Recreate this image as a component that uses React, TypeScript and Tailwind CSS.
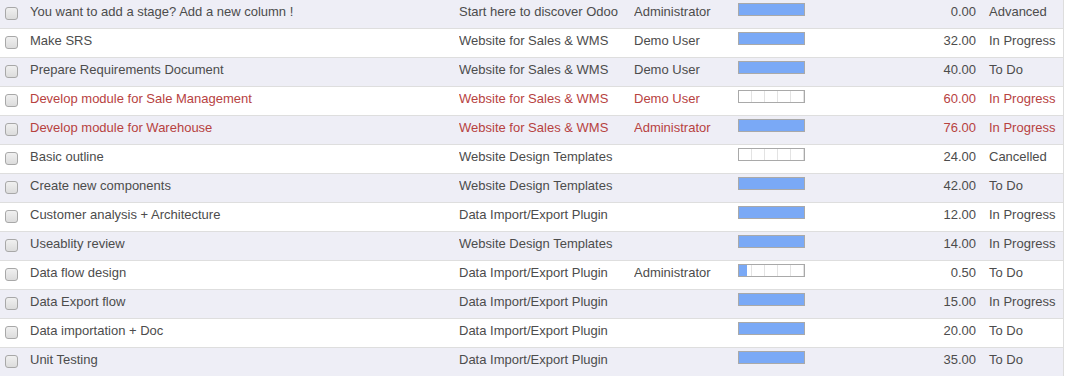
import React from 'react';

type Task = {
  name: string;
  project: string;
  user: string;
  progress: number;
  hours: string;
  stage: string;
  danger?: boolean;
};

const tasks: Task[] = [
  { name: 'You want to add a stage? Add a new column !', project: 'Start here to discover Odoo', user: 'Administrator', progress: 100, hours: '0.00', stage: 'Advanced' },
  { name: 'Make SRS', project: 'Website for Sales & WMS', user: 'Demo User', progress: 100, hours: '32.00', stage: 'In Progress' },
  { name: 'Prepare Requirements Document', project: 'Website for Sales & WMS', user: 'Demo User', progress: 100, hours: '40.00', stage: 'To Do' },
  { name: 'Develop module for Sale Management', project: 'Website for Sales & WMS', user: 'Demo User', progress: 0, hours: '60.00', stage: 'In Progress', danger: true },
  { name: 'Develop module for Warehouse', project: 'Website for Sales & WMS', user: 'Administrator', progress: 100, hours: '76.00', stage: 'In Progress', danger: true },
  { name: 'Basic outline', project: 'Website Design Templates', user: '', progress: 0, hours: '24.00', stage: 'Cancelled' },
  { name: 'Create new components', project: 'Website Design Templates', user: '', progress: 100, hours: '42.00', stage: 'To Do' },
  { name: 'Customer analysis + Architecture', project: 'Data Import/Export Plugin', user: '', progress: 100, hours: '12.00', stage: 'In Progress' },
  { name: 'Useablity review', project: 'Website Design Templates', user: '', progress: 100, hours: '14.00', stage: 'In Progress' },
  { name: 'Data flow design', project: 'Data Import/Export Plugin', user: 'Administrator', progress: 12, hours: '0.50', stage: 'To Do' },
  { name: 'Data Export flow', project: 'Data Import/Export Plugin', user: '', progress: 100, hours: '15.00', stage: 'In Progress' },
  { name: 'Data importation + Doc', project: 'Data Import/Export Plugin', user: '', progress: 100, hours: '20.00', stage: 'To Do' },
  { name: 'Unit Testing', project: 'Data Import/Export Plugin', user: '', progress: 100, hours: '35.00', stage: 'To Do' },
];

const ProgressBar: React.FC<{ value: number }> = ({ value }) => (
  <div className="relative w-[67px] h-[13px] border border-[#a9a9a9] bg-white flex">
    {[0, 1, 2, 3, 4].map((i) => (
      <div key={i} className="flex-1 border-r border-[#e3e3e3] last:border-r-0" />
    ))}
    <div className="absolute left-0 top-0 bottom-0 bg-[#7aa9f6]" style={{ width: `${value}%` }} />
  </div>
);

const App: React.FC = () => {
  return (
    <div className="w-[1064px] border-r border-[#dddddd] bg-white text-[13px] leading-[18px] text-[#4c4c4c] font-['Liberation_Sans',Arial,sans-serif]">
      {tasks.map((t, i) => (
        <div
          key={i}
          className={`flex h-[29px] border-b border-[#dedede] ${i % 2 === 0 ? 'bg-[#eeeef6]' : 'bg-white'} ${t.danger ? 'text-[#b7423f]' : ''}`}
        >
          <div className="w-[30px] shrink-0 pl-[5px] pt-[7px]">
            <div className="w-[13px] h-[13px] rounded-[3px] border border-[#a8a8a8] bg-gradient-to-b from-[#f0f0f0] to-[#dcdcdc]" />
          </div>
          <div className="w-[429px] shrink-0 pt-[3px] truncate">{t.name}</div>
          <div className="w-[175px] shrink-0 pt-[3px] truncate">{t.project}</div>
          <div className="w-[104px] shrink-0 pt-[3px] truncate">{t.user}</div>
          <div className="w-[80px] shrink-0 pt-[3px]">
            <ProgressBar value={t.progress} />
          </div>
          <div className="w-[158px] shrink-0 pt-[3px] text-right">{t.hours}</div>
          <div className="flex-1 pl-[13px] pt-[3px]">{t.stage}</div>
        </div>
      ))}
    </div>
  );
};

export default App;
